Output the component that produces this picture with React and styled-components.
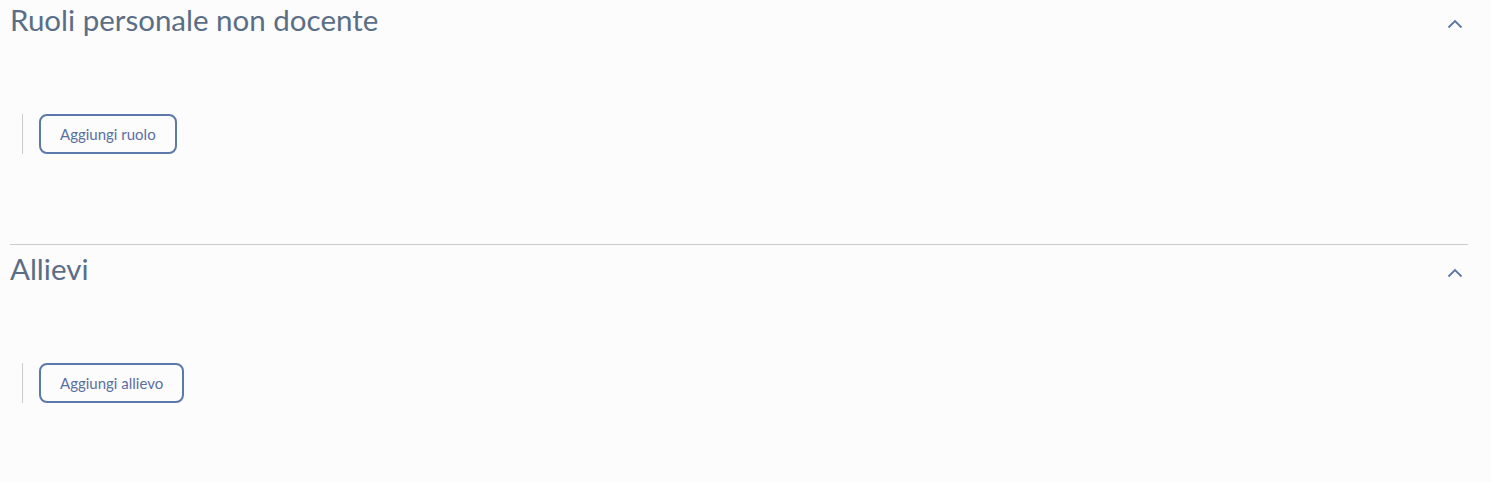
import React from "react";
import styled, { createGlobalStyle } from "styled-components";

const GlobalStyle = createGlobalStyle`
  html, body {
    margin: 0;
    padding: 0;
    background: #fcfcfc;
    font-family: Lato, "Noto Sans", sans-serif;
  }
`;

const Page = styled.div`
  margin-top: -4px;
  padding: 0 23px 0 10px;
`;

const Section = styled.section`
  border-bottom: ${(p) => (p.last ? "none" : "1px solid #cccccc")};
  padding-bottom: 90px;
`;

const Header = styled.div`
  display: flex;
  align-items: center;
  justify-content: space-between;
  height: 48px;
`;

const Title = styled.h2`
  margin: 0;
  font-size: 29.5px;
  font-weight: 400;
  line-height: 48px;
  color: #5a6e86;
`;

const Toggle = styled.button`
  border: none;
  background: none;
  padding: 0;
  margin: 8px 5px 0 0;
  display: flex;
  color: #5b76a8;
  cursor: pointer;
`;

const Body = styled.div`
  margin: 70px 0 0 12px;
  padding-left: 16px;
  border-left: 1px solid #cccccc;
  display: flex;
  align-items: center;
  height: 40px;
`;

const AddButton = styled.button`
  height: 40px;
  box-sizing: border-box;
  padding: 0 19px;
  border: 2px solid #5d78ab;
  border-radius: 8px;
  background: transparent;
  color: #5a6fa0;
  font-family: Lato, "Noto Sans", sans-serif;
  font-size: 15px;
  cursor: pointer;
`;

const Chevron = () => (
  <svg width="16" height="10" viewBox="0 0 16 10" fill="none">
    <path d="M1.5 8.5 L8 2 L14.5 8.5" stroke="currentColor" strokeWidth="1.8" />
  </svg>
);

const sections = [
  { title: "Ruoli personale non docente", action: "Aggiungi ruolo" },
  { title: "Allievi", action: "Aggiungi allievo" },
];

export default function App() {
  return (
    <Page>
      <GlobalStyle />
      {sections.map((s, i) => (
        <Section key={s.title} last={i === sections.length - 1}>
          <Header>
            <Title>{s.title}</Title>
            <Toggle aria-label="Comprimi">
              <Chevron />
            </Toggle>
          </Header>
          <Body>
            <AddButton>{s.action}</AddButton>
          </Body>
        </Section>
      ))}
    </Page>
  );
}
